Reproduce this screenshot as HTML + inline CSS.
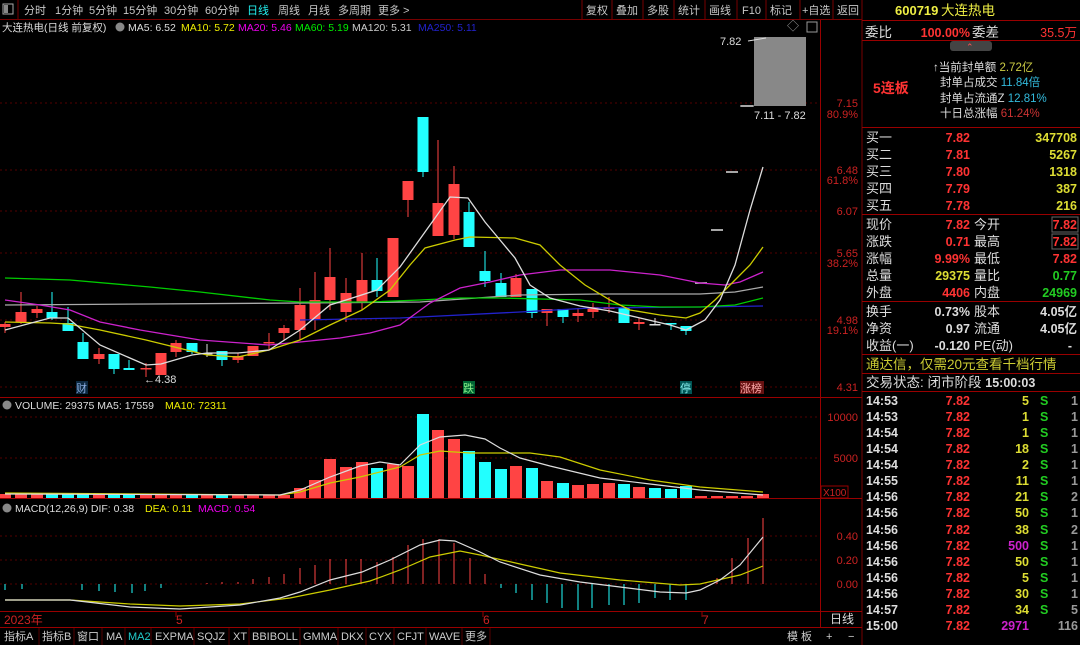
<!DOCTYPE html>
<html><head><meta charset="utf-8"><style>
body{margin:0;background:#000;width:1080px;height:645px;overflow:hidden;font-family:"Liberation Sans","Noto Sans CJK SC",sans-serif;}
svg{position:absolute;left:0;top:0}
text{font-family:"Liberation Sans","Noto Sans CJK SC",sans-serif}
</style></head><body>
<svg width="1080" height="645" viewBox="0 0 1080 645">
<rect width="1080" height="645" fill="#000"/>
<g font-size="11" fill="#c8c8c8">
<rect x="3" y="4" width="10" height="10" fill="none" stroke="#aaa"/><rect x="4" y="5" width="4" height="8" fill="#888"/>
<line x1="18" y1="0" x2="18" y2="19" stroke="#700"/>
<text x="24" y="14">分时</text><text x="55" y="14">1分钟</text><text x="89" y="14">5分钟</text><text x="123" y="14">15分钟</text><text x="164" y="14">30分钟</text><text x="205" y="14">60分钟</text>
<text x="247" y="14" fill="#2ee">日线</text><text x="278" y="14">周线</text><text x="308" y="14">月线</text><text x="338" y="14">多周期</text><text x="378" y="14">更多 &gt;</text>
<g stroke="#700"><line x1="582" y1="0" x2="582" y2="19"/><line x1="612" y1="0" x2="612" y2="19"/><line x1="643" y1="0" x2="643" y2="19"/><line x1="674" y1="0" x2="674" y2="19"/><line x1="705" y1="0" x2="705" y2="19"/><line x1="737" y1="0" x2="737" y2="19"/><line x1="766" y1="0" x2="766" y2="19"/><line x1="800" y1="0" x2="800" y2="19"/><line x1="833" y1="0" x2="833" y2="19"/><line x1="862" y1="0" x2="862" y2="645"/></g>
<text x="586" y="14">复权</text><text x="616" y="14">叠加</text><text x="647" y="14">多股</text><text x="678" y="14">统计</text><text x="709" y="14">画线</text><text x="742" y="14">F10</text><text x="770" y="14">标记</text><text x="802" y="14">+自选</text><text x="837" y="14">返回</text>
</g>
<line x1="0" y1="19.5" x2="862" y2="19.5" stroke="#700"/>
<g font-size="10.5">
<text x="2" y="31" fill="#ddd">大连热电(日线 前复权)</text><circle cx="120" cy="27" r="4.5" fill="#888"/>
<text x="128" y="31" fill="#ddd">MA5: 6.52</text><text x="181" y="31" fill="#ee0">MA10: 5.72</text><text x="238" y="31" fill="#e0e">MA20: 5.46</text><text x="295" y="31" fill="#0e0">MA60: 5.19</text><text x="352" y="31" fill="#ccc">MA120: 5.31</text><text x="418" y="31" fill="#22c">MA250: 5.11</text>
</g>
<text x="787" y="30" font-size="12" fill="#999">◇</text><rect x="807" y="22" width="10" height="10" fill="none" stroke="#999"/>
<line x1="820.5" y1="20" x2="820.5" y2="627" stroke="#900"/>
<g stroke="#500" stroke-dasharray="2,3"><line x1="0" y1="103" x2="820" y2="103"/><line x1="0" y1="170" x2="820" y2="170"/><line x1="0" y1="211" x2="820" y2="211"/><line x1="0" y1="253" x2="820" y2="253"/><line x1="0" y1="320" x2="820" y2="320"/><line x1="0" y1="387" x2="820" y2="387"/>
<line x1="0" y1="417" x2="820" y2="417"/><line x1="0" y1="458" x2="820" y2="458"/><line x1="0" y1="536" x2="820" y2="536"/><line x1="0" y1="560" x2="820" y2="560"/><line x1="0" y1="584" x2="820" y2="584"/></g>
<g font-size="11" fill="#c22" text-anchor="end">
<text x="858" y="107">7.15</text><text x="858" y="118">80.9%</text><text x="858" y="174">6.48</text><text x="858" y="184">61.8%</text><text x="858" y="215">6.07</text><text x="858" y="257">5.65</text><text x="858" y="267">38.2%</text><text x="858" y="324">4.98</text><text x="858" y="334">19.1%</text><text x="858" y="391">4.31</text>
<text x="858" y="421">10000</text><text x="858" y="462">5000</text><text x="858" y="540">0.40</text><text x="858" y="564">0.20</text><text x="858" y="588">0.00</text>
</g>
<rect x="821" y="486" width="27" height="12" fill="none" stroke="#900"/><text x="823" y="496" font-size="10" fill="#c22">X100</text>
<g stroke="#900"><line x1="0" y1="397.5" x2="862" y2="397.5"/><line x1="0" y1="498.5" x2="862" y2="498.5"/><line x1="0" y1="611.5" x2="862" y2="611.5"/><line x1="0" y1="627.5" x2="862" y2="627.5"/></g>
<rect x="754" y="37" width="52" height="69" fill="#888"/>
<line x1="740" y1="106" x2="754" y2="106" stroke="#ddd"/>
<text x="720" y="45" font-size="11" fill="#ddd">7.82</text><line x1="748" y1="41" x2="766" y2="38" stroke="#ddd"/>
<text x="754" y="119" font-size="11" fill="#ddd">7.11 - 7.82</text>
<text x="144" y="383" font-size="11" fill="#ddd">←4.38</text>
<g font-size="11"><rect x="76" y="381" width="12" height="13" fill="#0c2840"/><text x="76" y="392" fill="#8ad">财</text>
<rect x="463" y="381" width="12" height="13" fill="#063"/><text x="463" y="392" fill="#8e8">跌</text>
<rect x="680" y="381" width="12" height="13" fill="#055"/><text x="680" y="392" fill="#8ee">停</text>
<rect x="740" y="381" width="24" height="13" fill="#611"/><text x="740" y="392" fill="#faa">涨榜</text></g>
<!-- candles -->
<path fill="none" stroke="#f44" d="M5 322V333M21 292V324M37 306V318M99 348V364M146 363V377M161 353V375M176 340V357M238 353V363M253 346V356M269 333V350M284 325V340M300 288V340M315 272V330M330 248V310M346 278V322M362 253V310M393 238V297M408 181V217M438 140V236M454 166V239M516 274V297M547 309V326M578 308V322M593 303V318M609 297V313M639 318V330"/>
<path fill="none" stroke="#2ff" d="M52 292V320M68 307V331M83 333V359M114 354V374M129 360V370M192 343V354M222 351V366M377 258V297M423 117V177M469 202V247M485 251V287M501 273V297M532 289V318M563 309V323M624 307V323M671 323V330M686 326V335"/>
<path fill="none" stroke="#ddd" d="M207 344V357M655 318V325"/>
<g fill="#f44"><rect x="-0.5" y="324" width="11" height="3"/><rect x="15.5" y="312" width="11" height="10"/><rect x="31.5" y="309" width="11" height="4"/><rect x="93.5" y="354" width="11" height="5"/><rect x="140.5" y="368" width="11" height="1.5"/><rect x="155.5" y="353" width="11" height="22"/><rect x="170.5" y="343" width="11" height="9"/><rect x="232.5" y="356" width="11" height="4"/><rect x="247.5" y="346" width="11" height="10"/><rect x="263.5" y="342" width="11" height="1.5"/><rect x="278.5" y="328" width="11" height="5"/><rect x="294.5" y="305" width="11" height="25"/><rect x="309.5" y="300" width="11" height="20"/><rect x="324.5" y="277" width="11" height="23"/><rect x="340.5" y="293" width="11" height="19"/><rect x="356.5" y="280" width="11" height="23"/><rect x="387.5" y="238" width="11" height="59"/><rect x="402.5" y="181" width="11" height="19"/><rect x="432.5" y="203" width="11" height="33"/><rect x="448.5" y="184" width="11" height="51"/><rect x="510.5" y="278" width="11" height="19"/><rect x="541.5" y="309" width="11" height="4"/><rect x="572.5" y="313" width="11" height="3"/><rect x="587.5" y="307" width="11" height="5"/><rect x="603.5" y="307" width="11" height="2"/><rect x="633.5" y="322" width="11" height="2"/></g>
<g fill="#2ff"><rect x="46.5" y="312" width="11" height="6"/><rect x="62.5" y="323" width="11" height="8"/><rect x="77.5" y="342" width="11" height="17"/><rect x="108.5" y="354" width="11" height="15"/><rect x="123.5" y="368" width="11" height="2"/><rect x="186.5" y="343" width="11" height="9"/><rect x="216.5" y="351" width="11" height="9"/><rect x="371.5" y="280" width="11" height="11"/><rect x="417.5" y="117" width="11" height="55"/><rect x="463.5" y="212" width="11" height="35"/><rect x="479.5" y="271" width="11" height="10"/><rect x="495.5" y="283" width="11" height="14"/><rect x="526.5" y="289" width="11" height="24"/><rect x="557.5" y="309" width="11" height="8"/><rect x="618.5" y="307" width="11" height="16"/><rect x="665.5" y="323" width="11" height="1.5"/><rect x="680.5" y="326" width="11" height="5"/></g>
<g fill="#ddd"><rect x="201.5" y="353" width="11" height="1.5"/><rect x="649.5" y="324" width="11" height="1.5"/></g>
<path stroke="#ddd" stroke-width="1.5" d="M695 283H707M711 230H723M726 172H738M741 106H753"/>
<g fill="none" stroke-width="1.3">
<polyline stroke="#22c" points="300,320 400,318 520,312 590,308 700,307 763,306"/>
<polyline stroke="#aaa" points="5,305 150,304 300,303 420,302 520,295 600,294 700,294 735,292 763,287"/>
<polyline stroke="#0c0" points="5,278 70,280 150,287 200,292 270,300 300,302 370,302 420,300 460,298 500,298 580,300 620,305 660,307 700,307 735,305 763,298"/>
<polyline stroke="#c2c" points="5,300 40,305 70,310 100,322 140,330 200,340 269,345 300,342 340,338 370,333 400,325 430,303 460,288 490,282 520,275 560,270 610,270 660,275 700,283 725,285 740,282 763,272"/>
<polyline stroke="#cc0" points="5,322 50,323 68,324 100,330 146,340 207,355 238,357 269,350 300,340 330,325 362,310 390,290 410,265 425,248 455,240 470,237 515,238 540,245 560,265 585,285 610,300 630,310 660,315 686,318 700,313 715,300 730,285 750,265 763,247"/>
<polyline stroke="#ddd" points="5,330 50,318 68,318 100,345 146,365 161,364 192,355 207,353 238,353 269,350 300,330 330,305 346,300 377,290 400,267 425,232 450,197 468,198 485,222 500,240 515,258 530,285 550,298 580,306 610,311 640,318 670,325 686,330 705,320 720,300 735,265 750,210 763,167"/>
</g>
<!-- volume -->
<g font-size="10.5"><circle cx="7" cy="405" r="4.5" fill="#888"/><text x="15" y="409" fill="#ddd">VOLUME: 29375  MA5: 17559</text><text x="165" y="409" fill="#ee0">MA10: 72311</text></g>
<g fill="#f44"><rect x="-1" y="494" width="12" height="4"/><rect x="15" y="493" width="12" height="5"/><rect x="31" y="494" width="12" height="4"/><rect x="93" y="494" width="12" height="4"/><rect x="140" y="495" width="12" height="3"/><rect x="155" y="495" width="12" height="3"/><rect x="170" y="495" width="12" height="3"/><rect x="201" y="495" width="12" height="3"/><rect x="232" y="495" width="12" height="3"/><rect x="247" y="495" width="12" height="3"/><rect x="263" y="495" width="12" height="3"/><rect x="278" y="495" width="12" height="3"/><rect x="294" y="488" width="12" height="10"/><rect x="309" y="480" width="12" height="18"/><rect x="324" y="459" width="12" height="39"/><rect x="340" y="467" width="12" height="31"/><rect x="356" y="462" width="12" height="36"/><rect x="387" y="464" width="12" height="34"/><rect x="402" y="466" width="12" height="32"/><rect x="432" y="430" width="12" height="68"/><rect x="448" y="439" width="12" height="59"/><rect x="510" y="466" width="12" height="32"/><rect x="541" y="481" width="12" height="17"/><rect x="572" y="485" width="12" height="13"/><rect x="587" y="484" width="12" height="14"/><rect x="603" y="483" width="12" height="15"/><rect x="633" y="487" width="12" height="11"/><rect x="695" y="496" width="12" height="2"/><rect x="711" y="496" width="12" height="2"/><rect x="726" y="496" width="12" height="2"/><rect x="741" y="496" width="12" height="2"/><rect x="757" y="494" width="12" height="4"/></g>
<g fill="#2ff"><rect x="46" y="493" width="12" height="5"/><rect x="62" y="494" width="12" height="4"/><rect x="77" y="494" width="12" height="4"/><rect x="108" y="494" width="12" height="4"/><rect x="123" y="494" width="12" height="4"/><rect x="186" y="495" width="12" height="3"/><rect x="216" y="495" width="12" height="3"/><rect x="371" y="468" width="12" height="30"/><rect x="417" y="414" width="12" height="84"/><rect x="463" y="451" width="12" height="47"/><rect x="479" y="462" width="12" height="36"/><rect x="495" y="469" width="12" height="29"/><rect x="526" y="468" width="12" height="30"/><rect x="557" y="483" width="12" height="15"/><rect x="618" y="484" width="12" height="14"/><rect x="649" y="488" width="12" height="10"/><rect x="665" y="489" width="12" height="9"/><rect x="680" y="486" width="12" height="12"/></g>
<g fill="none" stroke-width="1.2">
<polyline stroke="#cc0" points="5,493 280,495 300,492 330,483 360,477 400,467 420,455 440,451 470,453 530,453 560,457 600,470 650,480 700,487 763,492"/>
<polyline stroke="#ddd" points="5,494 280,495 300,490 330,477 360,466 380,462 400,465 420,445 440,437 465,435 485,439 500,448 520,458 550,466 600,478 650,484 700,490 763,495"/>
</g>
<!-- MACD -->
<g font-size="10.5"><circle cx="7" cy="508" r="4.5" fill="#888"/><text x="15" y="512" fill="#ddd">MACD(12,26,9)  DIF: 0.38</text><text x="145" y="512" fill="#ee0">DEA: 0.11</text><text x="198" y="512" fill="#e0e">MACD: 0.54</text></g>
<path fill="none" stroke="#2ff" d="M5 584V590M22 584V589M82 584V590M99 584V591M115 584V592M132 584V593M145 584V591M161 584V588M501 584V588M516 584V593M532 584V600M547 584V603M562 584V608M578 584V610M592 584V608M609 584V605M624 584V605M639 584V603M655 584V598M670 584V600M686 584V600"/>
<path fill="none" stroke="#f44" d="M207 584V583M222 584V582M238 584V582M253 584V579M269 584V577M284 584V574M300 584V568M315 584V565M330 584V559M346 584V559M361 584V559M377 584V562M393 584V557M408 584V545M423 584V539M439 584V539M454 584V543M470 584V558M485 584V574M717 584V578M732 584V558M748 584V538M763 584V518"/>
<g fill="none" stroke-width="1.2">
<polyline stroke="#cc0" points="5,600 70,600 130,604 180,606 240,604 290,598 330,590 370,581 400,570 430,557 460,551 480,555 520,564 560,573 620,580 680,585 700,584 740,575 763,566"/>
<polyline stroke="#ddd" points="5,600 70,600 130,607 180,609 240,605 280,598 300,592 330,580 346,576 362,572 390,560 420,545 440,540 455,541 480,552 500,562 540,575 580,582 620,587 660,592 686,593 700,590 720,580 740,565 763,537"/>
</g>
<g font-size="12" fill="#c22"><text x="4" y="624">2023年</text><text x="176" y="624">5</text><text x="483" y="624">6</text><text x="702" y="624">7</text></g>
<g stroke="#900"><line x1="176" y1="612" x2="176" y2="617"/><line x1="483" y1="612" x2="483" y2="617"/><line x1="702" y1="612" x2="702" y2="617"/></g>
<text x="830" y="623" font-size="12" fill="#ddd">日线</text>
<g font-size="11" fill="#ccc">
<text x="4" y="640">指标A</text><text x="42" y="640">指标B</text><text x="77" y="640">窗口</text><text x="106" y="640">MA</text><text x="128" y="640" fill="#2cc">MA2</text><text x="155" y="640">EXPMA</text><text x="197" y="640">SQJZ</text><text x="233" y="640">XT</text><text x="252" y="640">BBIBOLL</text><text x="303" y="640">GMMA</text><text x="341" y="640">DKX</text><text x="369" y="640">CYX</text><text x="397" y="640">CFJT</text><text x="429" y="640">WAVE</text><text x="465" y="640">更多</text>
<text x="787" y="640">模 板</text><text x="826" y="640">+</text><text x="848" y="640">−</text>
</g>
<g stroke="#500"><line x1="39" y1="628" x2="39" y2="645"/><line x1="74" y1="628" x2="74" y2="645"/><line x1="102" y1="628" x2="102" y2="645"/><line x1="125" y1="628" x2="125" y2="645"/><line x1="151" y1="628" x2="151" y2="645"/><line x1="194" y1="628" x2="194" y2="645"/><line x1="229" y1="628" x2="229" y2="645"/><line x1="249" y1="628" x2="249" y2="645"/><line x1="300" y1="628" x2="300" y2="645"/><line x1="338" y1="628" x2="338" y2="645"/><line x1="366" y1="628" x2="366" y2="645"/><line x1="394" y1="628" x2="394" y2="645"/><line x1="426" y1="628" x2="426" y2="645"/><line x1="462" y1="628" x2="462" y2="645"/><line x1="490" y1="628" x2="490" y2="645"/></g>

<!-- right panel -->
<g font-size="13.5">
<text x="895" y="15" fill="#ee4" font-weight="bold" font-size="13">600719</text><text x="941" y="15" fill="#ee4">大连热电</text>
<line x1="862" y1="20.5" x2="1080" y2="20.5" stroke="#900"/>
<text x="865" y="37" fill="#ddd">委比</text><text x="970" y="37" fill="#f33" text-anchor="end" font-weight="bold" font-size="12.5">100.00%</text><text x="972" y="37" fill="#ddd">委差</text><text x="1077" y="37" fill="#f33" text-anchor="end" font-size="12.5">35.5万</text>
<line x1="862" y1="40.5" x2="1080" y2="40.5" stroke="#900"/>
<rect x="950" y="41" width="42" height="10" rx="3" fill="#444"/><text x="966" y="50" font-size="9" fill="#f55">⌃</text>
<text x="873" y="93" fill="#f33" font-weight="bold" font-size="14">5连板</text>
<g font-size="11.5"><text x="933" y="71" fill="#ddd">↑当前封单额 <tspan fill="#cc4">2.72亿</tspan></text>
<text x="940" y="86" fill="#ddd">封单占成交 <tspan fill="#3bd">11.84倍</tspan></text>
<text x="940" y="102" fill="#ddd">封单占流通Z <tspan fill="#3bd">12.81%</tspan></text>
<text x="940" y="117" fill="#ddd">十日总涨幅 <tspan fill="#c33">61.24%</tspan></text></g>
<line x1="862" y1="127.5" x2="1080" y2="127.5" stroke="#900"/>
<g font-size="13"><text x="866" y="142" fill="#ddd">买一</text><text x="866" y="159" fill="#ddd">买二</text><text x="866" y="176" fill="#ddd">买三</text><text x="866" y="193" fill="#ddd">买四</text><text x="866" y="210" fill="#ddd">买五</text></g>
<g font-size="12.5" font-weight="bold" text-anchor="end"><g fill="#f33"><text x="970" y="142">7.82</text><text x="970" y="159">7.81</text><text x="970" y="176">7.80</text><text x="970" y="193">7.79</text><text x="970" y="210">7.78</text></g>
<g fill="#dd3"><text x="1077" y="142">347708</text><text x="1077" y="159">5267</text><text x="1077" y="176">1318</text><text x="1077" y="193">387</text><text x="1077" y="210">216</text></g></g>
<line x1="862" y1="214.5" x2="1080" y2="214.5" stroke="#900"/>
<g font-size="13" fill="#ddd"><text x="866" y="229">现价</text><text x="866" y="246">涨跌</text><text x="866" y="263">涨幅</text><text x="866" y="280">总量</text><text x="866" y="297">外盘</text>
<text x="974" y="229">今开</text><text x="974" y="246">最高</text><text x="974" y="263">最低</text><text x="974" y="280">量比</text><text x="974" y="297">内盘</text></g>
<rect x="1052" y="217" width="26" height="15" fill="none" stroke="#666"/><rect x="1052" y="234" width="26" height="15" fill="none" stroke="#666"/>
<g font-size="12.5" font-weight="bold" text-anchor="end"><text x="970" y="229" fill="#f33">7.82</text><text x="970" y="246" fill="#f33">0.71</text><text x="970" y="263" fill="#f33">9.99%</text><text x="970" y="280" fill="#dd3">29375</text><text x="970" y="297" fill="#f33">4406</text>
<text x="1077" y="229" fill="#f33">7.82</text><text x="1077" y="246" fill="#f33">7.82</text><text x="1077" y="263" fill="#f33">7.82</text><text x="1077" y="280" fill="#2c2">0.77</text><text x="1077" y="297" fill="#2c2">24969</text></g>
<line x1="862" y1="301.5" x2="1080" y2="301.5" stroke="#900"/>
<g font-size="13" fill="#ddd"><text x="866" y="316">换手</text><text x="866" y="333">净资</text><text x="866" y="350">收益(一)</text><text x="974" y="316">股本</text><text x="974" y="333">流通</text><text x="974" y="350">PE(动)</text></g>
<g font-size="12.5" font-weight="bold" text-anchor="end" fill="#ddd"><text x="970" y="316">0.73%</text><text x="970" y="333">0.97</text><text x="970" y="350">-0.120</text><text x="1077" y="316">4.05亿</text><text x="1077" y="333">4.05亿</text><text x="1072" y="350">-</text></g>
<line x1="862" y1="354.5" x2="1080" y2="354.5" stroke="#900"/>
<text x="866" y="369" font-size="13.5" fill="#cc3">通达信，仅需20元查看千档行情</text>
<line x1="862" y1="373.5" x2="1080" y2="373.5" stroke="#900"/>
<text x="866" y="387" font-size="13.5" fill="#ddd">交易状态: 闭市阶段 <tspan font-weight="bold" font-size="12.5">15:00:03</tspan></text>
<line x1="862" y1="391.5" x2="1080" y2="391.5" stroke="#900"/>
</g>
<g font-size="12.5" font-weight="bold">
<g fill="#ddd"><text x="866" y="405">14:53</text><text x="866" y="421">14:53</text><text x="866" y="437">14:54</text><text x="866" y="453">14:54</text><text x="866" y="469">14:54</text><text x="866" y="485">14:55</text><text x="866" y="501">14:56</text><text x="866" y="517">14:56</text><text x="866" y="534">14:56</text><text x="866" y="550">14:56</text><text x="866" y="566">14:56</text><text x="866" y="582">14:56</text><text x="866" y="598">14:56</text><text x="866" y="614">14:57</text><text x="866" y="630">15:00</text></g>
<g fill="#f33" text-anchor="end"><text x="970" y="405">7.82</text><text x="970" y="421">7.82</text><text x="970" y="437">7.82</text><text x="970" y="453">7.82</text><text x="970" y="469">7.82</text><text x="970" y="485">7.82</text><text x="970" y="501">7.82</text><text x="970" y="517">7.82</text><text x="970" y="534">7.82</text><text x="970" y="550">7.82</text><text x="970" y="566">7.82</text><text x="970" y="582">7.82</text><text x="970" y="598">7.82</text><text x="970" y="614">7.82</text><text x="970" y="630">7.82</text></g>
<g fill="#dd3" text-anchor="end"><text x="1029" y="405">5</text><text x="1029" y="421">1</text><text x="1029" y="437">1</text><text x="1029" y="453">18</text><text x="1029" y="469">2</text><text x="1029" y="485">11</text><text x="1029" y="501">21</text><text x="1029" y="517">50</text><text x="1029" y="534">38</text><text x="1029" y="550" fill="#c2c">500</text><text x="1029" y="566">50</text><text x="1029" y="582">5</text><text x="1029" y="598">30</text><text x="1029" y="614">34</text><text x="1029" y="630" fill="#c2c">2971</text></g>
<g fill="#2c2"><text x="1040" y="405">S</text><text x="1040" y="421">S</text><text x="1040" y="437">S</text><text x="1040" y="453">S</text><text x="1040" y="469">S</text><text x="1040" y="485">S</text><text x="1040" y="501">S</text><text x="1040" y="517">S</text><text x="1040" y="534">S</text><text x="1040" y="550">S</text><text x="1040" y="566">S</text><text x="1040" y="582">S</text><text x="1040" y="598">S</text><text x="1040" y="614">S</text></g>
<g fill="#999" text-anchor="end"><text x="1078" y="405">1</text><text x="1078" y="421">1</text><text x="1078" y="437">1</text><text x="1078" y="453">1</text><text x="1078" y="469">1</text><text x="1078" y="485">1</text><text x="1078" y="501">2</text><text x="1078" y="517">1</text><text x="1078" y="534">2</text><text x="1078" y="550">1</text><text x="1078" y="566">1</text><text x="1078" y="582">1</text><text x="1078" y="598">1</text><text x="1078" y="614">5</text><text x="1078" y="630">116</text></g>
</g>
</svg>
</body></html>
